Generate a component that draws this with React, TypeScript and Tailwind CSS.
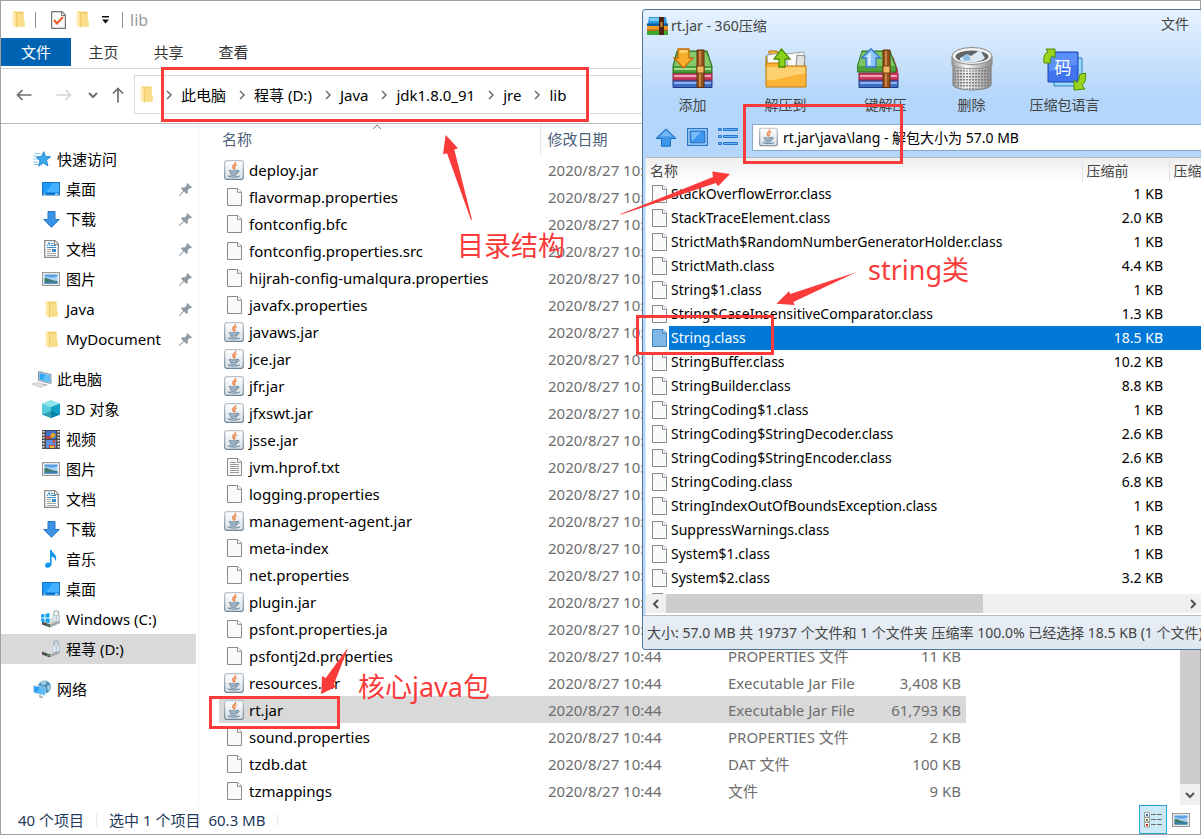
import type { ReactNode } from "react";

/* ---------- icons ---------- */

function JarIcon() {
  return (
    <svg width="20" height="20" viewBox="0 0 20 20" aria-hidden="true">
      <defs>
        <linearGradient id="jarBg" x1="0" y1="0" x2="0" y2="1">
          <stop offset="0" stopColor="#ffffff" />
          <stop offset="1" stopColor="#d9dfe4" />
        </linearGradient>
        <linearGradient id="jarEdge" x1="0" y1="0" x2="0" y2="1">
          <stop offset="0" stopColor="#b9c4cc" />
          <stop offset="1" stopColor="#6f8596" />
        </linearGradient>
      </defs>
      <rect x="0.7" y="0.7" width="18.6" height="18.6" rx="2" fill="url(#jarBg)" stroke="url(#jarEdge)" strokeWidth="1.2" />
      <path d="M11.600 2.400c.5 1.600-3.400 2.600-3 4.400.2.800 1 1.200 1.100 2.200M12.600 5c-1.500.5-2.400 1.300-1.800 2.300.4.6.2 1.200-.4 1.700" fill="none" stroke="#ea7a35" strokeWidth="1.200" strokeLinecap="round" />
      <path d="M5.200 10.200c2.200.8 6 .8 8.200 0l-.9 3.200c-1.800.6-4.400.6-6 0z" fill="#a5b7c6" stroke="#5c7d98" strokeWidth=".7" />
      <path d="M13.300 10.500c2.600-.8 2.900 1.900-.5 2.500M6.300 14.900c2 .6 4.400.6 6.200 0M4 16c2.500 1.500 9 1.500 11.500.1" fill="none" stroke="#5c7d98" strokeWidth="1" strokeLinecap="round" />
    </svg>
  );
}

function PageIcon({ lined = false, tone = "light" }: { lined?: boolean; tone?: "light" | "blue" }) {
  const fill = tone === "blue" ? "#7fb8e6" : "#fafafa";
  const edge = tone === "blue" ? "#3f7fb8" : "#8a8a8a";
  return (
    <svg width="15" height="18" viewBox="0 0 15 18" aria-hidden="true">
      <path d="M.5.500H11L14.500 4V17.500H.5z" fill={fill} stroke={edge} />
      <path d="M10.500.500V4.300H14.500" fill={tone === "blue" ? "#a9d0ef" : "#fff"} stroke={edge} />
      {lined && <path d="M3 4.500h6M3 6.500h9M3 8.500h9M3 10.500h9M3 12.500h9M3 14.500h9" stroke="#9a9a9a" />}
    </svg>
  );
}

function FolderIcon() {
  return (
    <svg width="13" height="17" viewBox="0 0 13 17" aria-hidden="true">
      <defs>
        <linearGradient id="folderFace" x1="0" y1="0" x2="1" y2="0">
          <stop offset="0" stopColor="#fff0bc" />
          <stop offset="1" stopColor="#fbe29a" />
        </linearGradient>
      </defs>
      <path d="M2 .500h9.500v9.500H12.500V15.500H2z" fill="#f3cf6c" />
      <path d="M4.500 2.500h7V10h1v5.500h-8z" fill="#f9dc88" />
      <path d="M.500 0 4.500 2.500V17L.500 15z" fill="url(#folderFace)" />
      <path d="M4.500 2.500V17" stroke="#e6bd55" strokeWidth=".6" />
    </svg>
  );
}

function StarIcon() {
  return (
    <svg width="18" height="16" viewBox="0 0 18 16" aria-hidden="true">
      <path d="M1.500 2.500h6M0 5h4M.500 8h4.500M0 11h5M1 13.500h4.500" stroke="#8ccaf0" />
      <path d="M10.800.700l1.800 4.700 5.100.3-4.200 3.400 1.500 5.800-4.600-2.900L5.600 15l1.300-5.300L3.300 5.900l5-.5z" fill="#3aa8ec" stroke="#1878c4" strokeWidth=".8" />
    </svg>
  );
}

function DesktopIcon() {
  return (
    <svg width="18" height="14" viewBox="0 0 18 14" aria-hidden="true">
      <rect x=".5" y=".5" width="17" height="12.500" fill="#1e9bf8" stroke="#1473c4" />
      <path d="M11 1h6v9H4z" fill="#45b1ff" />
      <path d="M1 11.500h16" stroke="#0c5fa8" />
      <path d="M1.500 12h2M13 12h3.500" stroke="#fff" />
    </svg>
  );
}

function DownloadIcon() {
  return (
    <svg width="17" height="17" viewBox="0 0 17 17" aria-hidden="true">
      <path d="M5 .500h7v8h4.300L8.500 16.300.700 8.500H5z" fill="#3b93e6" stroke="#2a76c4" />
    </svg>
  );
}

function DocumentIcon() {
  return (
    <svg width="15" height="18" viewBox="0 0 15 18" aria-hidden="true">
      <path d="M.700.700H11l3.300 3.300v13.300H.7z" fill="#fff" stroke="#8b8b8b" strokeWidth="1.300" />
      <path d="M10.500.700V4.500H14" fill="#fff" stroke="#8b8b8b" />
      <path d="M3 6 5 2.500 6.200 6M7 3.500h2.500M7 5.500h5M3 7.500h9" fill="none" stroke="#3c8cc8" />
      <path d="M3 9.500h4M3 11.500h4M3 13.500h9M3 15.500h9" stroke="#a2a2a2" />
      <path d="M8 9h4v3H8z" fill="#3c8cc8" />
    </svg>
  );
}

function PictureIcon() {
  return (
    <svg width="18" height="14" viewBox="0 0 18 14" aria-hidden="true">
      <rect x=".6" y=".6" width="16.800" height="12.800" fill="#fff" stroke="#9a9a9a" strokeWidth="1.200" />
      <path d="M2.500 2.500h13v9h-13z" fill="#a8d0f4" />
      <path d="M2.500 2.500h13v2l-6 1-7-1z" fill="#5c9fe0" />
      <path d="M2.500 6c3-.5 5 2 13 3v2.500h-13z" fill="#3f7a66" />
      <path d="M2.500 9.500c4 .8 9-.5 13 .5v1.500h-13z" fill="#3c80b4" />
    </svg>
  );
}

function ComputerIcon() {
  return (
    <svg width="20" height="17" viewBox="0 0 20 17" aria-hidden="true">
      <path d="M6.500.500 19 3.500v9L6.500 9.500z" fill="#d9dde0" stroke="#6e8290" strokeWidth=".8" />
      <path d="M7.500 2l10.500 2.500v7L7.500 8.600z" fill="#2ea5ee" />
      <path d="M13 3.300l5 1.200v6.900l-7-1.900z" fill="#62c0f8" />
      <path d="M11 12.500l5 1.200-2.500 1.300-5-1.500z" fill="#a9b0b5" />
      <path d="M0 13l5-1.500 8 2.500-4 2.500z" fill="#e3e6e8" stroke="#b7bcc0" strokeWidth=".7" />
    </svg>
  );
}

function CubeIcon() {
  return (
    <svg width="18" height="18" viewBox="0 0 18 18" aria-hidden="true">
      <path d="M9 0l9 3.500-9 3.500L0 3.500z" fill="#8be3ea" />
      <path d="M0 3.500 9 7v11L0 14.500z" fill="#56cbdc" />
      <path d="M18 3.500 9 7v11l9-3.500z" fill="#12a0c4" />
      <path d="M0 14.500 9 11v7z" fill="#2c9fb4" />
      <path d="M9 11l9 3.500L9 18z" fill="#0a86a8" />
    </svg>
  );
}

function VideoIcon() {
  return (
    <svg width="18" height="19" viewBox="0 0 18 19" aria-hidden="true">
      <path d="M0 0h18v19H0z" fill="#4b4b4b" />
      <path d="M4 1h10v8H4z" fill="#3d6fd0" />
      <path d="M4 10h10v8H4z" fill="#5b91e4" />
      <path d="M9 3.500c2-2 5 0 4.500 2.500L10 8.500 8 6z" fill="#e0a828" />
      <path d="M4 6l5 .5V9H4z" fill="#c43c3c" />
      <path d="M10 10.500h4L12 14zM7 15h6v3H7z" fill="#d84a30" />
      <path d="M8 16h4v2H8z" fill="#e8c040" />
      <path d="M1.500 1v17M16.500 1v17" stroke="#f4f4f4" strokeWidth="2" strokeDasharray="1.600 1.400" />
    </svg>
  );
}

function MusicIcon() {
  return (
    <svg width="12" height="18" viewBox="0 0 12 18" aria-hidden="true">
      <path d="M5 0h1.600c.3 3 5 4 4.600 8.500-.2 1.300-.6 1.800-1.200 2.500.6-2.500-.8-4-3.400-4.600V14c0 4.500-6.600 5-6.600 1.500C0 12.800 3 12 5 13z" fill="#1296f0" />
    </svg>
  );
}

function DriveIcon({ system = false }: { system?: boolean }) {
  return (
    <svg width="20" height="18" viewBox="0 0 20 18" aria-hidden="true">
      <path d="M13 5V2.500C13 .300 17.500.300 17.500 2.500V6" fill="none" stroke="#a6b0b6" strokeWidth="1.300" />
      <path d="M1 11.500 11 8l8 1.500v3.500L9 17.500l-8-3z" fill="#d8dadb" />
      <path d="M1 11.500l8 3v3l-8-3z" fill="#4c4c4c" />
      <path d="M9 14.500 19 10v3L9 17.500z" fill="#a5a8aa" />
      <path d="M6 14.500l2 .7v1l-2-.7z" fill="#4be03c" />
      <path d="M11.500 5h7.500v6.500h-7.500z" fill="#b9ccd8" />
      <path d="M12.500 6h2v5h-2zM16 6h1.500v5H16z" fill="#e6eff5" />
      {system && <path d="M0 4.500l3.500-.6v3.600H0zM4.500 3.700 8.500 3v4.500h-4zM0 8.500h3.500V12L0 11.500zM4.500 8.500h4V13l-4-.8z" fill="#12a4f0" />}
    </svg>
  );
}

function NetworkIcon() {
  return (
    <svg width="19" height="18" viewBox="0 0 19 18" aria-hidden="true">
      <circle cx="11.500" cy="7" r="6.500" fill="#4d94bd" />
      <path d="M7.500 2.500c2-2 5-2 6-1l-1 3-3 1zM14 6l3.500-1c.5 3-1 5-2.500 6z" fill="#a4cfe2" />
      <path d="M.500 5.500 12 7.500v8L.500 12.500z" fill="#2aa0ee" stroke="#d3e6f2" strokeWidth=".9" />
      <path d="M7 6.800l4.500.8v7L4 12.800z" fill="#5fbcf8" />
      <path d="M7 14.800v2l3 .7" stroke="#a0aab0" fill="none" strokeWidth="1.500" />
    </svg>
  );
}

function PinIcon() {
  return (
    <svg width="13" height="13" viewBox="0 0 13 13" aria-hidden="true">
      <path d="M8.300 0 13 4.500l-1 .8-1.200-.2L8.700 7.300l.2 2.500-1.300 1.200L5 8.500.700 13 0 12.300 4.300 8 2 5.500l1.200-1.300 2.500.2L7.800 2.200 7.500 1z" fill="#8f9ba4" />
    </svg>
  );
}

function NavArrow({ kind, color }: { kind: "back" | "forward" | "up"; color: string }) {
  const turn = kind === "back" ? undefined : kind === "forward" ? "rotate(180 8 8)" : "rotate(90 8 8)";
  return (
    <svg width="16" height="16" viewBox="0 0 16 16" aria-hidden="true">
      <path d="M6.500 3 1.500 8l5 5M1.500 8h14" transform={turn} fill="none" stroke={color} strokeWidth="1.700" />
    </svg>
  );
}

function Chevron({ dir, size = 10, color = "#6d6d6d", weight = 1.5 }: { dir: "left" | "right" | "up" | "down"; size?: number; color?: string; weight?: number }) {
  const d = { left: "M7 1 3 5l4 4", right: "M3 1l4 4-4 4", up: "M1 7l4-4 4 4", down: "M1 3l4 4 4-4" }[dir];
  return (
    <svg width={size} height={size} viewBox="0 0 10 10" aria-hidden="true">
      <path d={d} fill="none" stroke={color} strokeWidth={weight} />
    </svg>
  );
}

function ZipLogo() {
  return (
    <svg width="21" height="18" viewBox="0 0 21 18" aria-hidden="true">
      <path d="M2 0h17l1 7H1z" fill="#2c9be0" />
      <path d="M3 1h9v3H2.500z" fill="#7cc9f4" />
      <path d="M0 6.500h21V9H0z" fill="#0f5f9e" />
      <path d="M0 9h21v4H0z" fill="#f39a24" />
      <path d="M0 13h21v5H0z" fill="#3fa82c" />
      <path d="M0 12.500h21v1.200H0z" fill="#c65c10" />
      <path d="M12 0h5v18h-5z" fill="#4a2410" />
      <path d="M13.500 5h2v5h-2z" fill="#d89040" />
    </svg>
  );
}

function BookStack({ open = false }: { open?: boolean }) {
  return (
    <>
      <path d="M2 32h39v7.500H2z" fill="#3f6cc4" stroke="#1c3c86" />
      <path d="M3 34h37v2H3z" fill="#8fb0e8" />
      <path d="M2 25h39v7H2z" fill="#c93a63" stroke="#8e1c40" />
      <path d="M3 27h37v2H3z" fill="#eea0b6" />
      {open ? (
        <>
          <path d="M36 8l5 14v6l-6-4z" fill="#c42c50" />
          <path d="M5 3h28l6 16v5H0v-5z" fill="#4ea23c" stroke="#2c7020" />
          <path d="M5 4h27l6 14H1z" fill="#7cc45e" />
        </>
      ) : (
        <>
          <path d="M6 3h30l5 15v7H2v-7z" fill="#4a9c38" stroke="#2c7020" />
          <path d="M7 4h28l5 14H3z" fill="#86c96a" />
          <path d="M3 20h37v2H3z" fill="#a8dc90" />
        </>
      )}
      <path d="M26 2h7v37.500h-7z" fill="#96521c" stroke="#5e2f0c" />
      <path d="M28 3h2v36h-2z" fill="#c98448" />
      <path d="M26 18h7v7h-7z" fill="#f0b860" stroke="#7a420f" />
    </>
  );
}

function AddArchiveIcon() {
  return (
    <svg width="44" height="42" viewBox="0 0 44 42" aria-hidden="true">
      <BookStack />
      <path d="M7 1h11v9h4L12.500 20 3 10h4z" fill="#f8ae2c" stroke="#c46c0c" strokeWidth="1.300" />
      <path d="M8.500 2.500h8v2h-8z" fill="#fddc8c" />
    </svg>
  );
}

function ExtractToIcon() {
  return (
    <svg width="44" height="42" viewBox="0 0 44 42" aria-hidden="true">
      <path d="M5 3h8l2 4v12H2V8h3z" fill="#f0b43c" stroke="#a8700c" />
      <path d="M3 7l14-2 1 15H4zM22 6l18-2 1 16H24z" fill="#fafafa" stroke="#a0a0a0" />
      <path d="M33 7l8 1-1 12h-8z" fill="#e2e2e2" stroke="#8a8a8a" />
      <path d="M2 15h14l3 3h23v21H2z" fill="#fbb437" stroke="#c27c0c" />
      <path d="M3 19h38v7c-14 0-20 6-38 6z" fill="#fdd070" />
      <path d="M15 19v-8h-5L17.500 1 26 11h-5v8z" fill="#8cd41c" stroke="#4c8c08" strokeWidth="1.300" />
    </svg>
  );
}

function OneClickIcon() {
  return (
    <svg width="44" height="42" viewBox="0 0 44 42" aria-hidden="true">
      <BookStack open />
      <path d="M9 19v-9H4.500L14 .700 23.500 10H19v9z" fill="#8cc4fc" stroke="#3878cc" strokeWidth="1.300" />
      <path d="M11 17V9h-2l5-5v13z" fill="#d0e8ff" />
    </svg>
  );
}

function TrashIcon() {
  return (
    <svg width="42" height="46" viewBox="0 0 42 46" aria-hidden="true">
      <defs>
        <linearGradient id="binBody" x1="0" y1="0" x2="1" y2="0">
          <stop offset="0" stopColor="#9c9c9c" />
          <stop offset=".35" stopColor="#f6f6f6" />
          <stop offset="1" stopColor="#8c8c8c" />
        </linearGradient>
        <pattern id="binHoles" width="3" height="3" patternUnits="userSpaceOnUse">
          <path d="M0 0h2v1.500H0z" fill="#7d7d7d" />
        </pattern>
      </defs>
      <path d="M2 10v29c2 6.500 36 6.500 38 0V10z" fill="url(#binBody)" stroke="#777" />
      <path d="M3.500 22c9 3.500 26 3.500 35 0v17c-6 5-29 5-35 0z" fill="url(#binHoles)" />
      <path d="M1 10v9c5 5 35 5 40 0v-9z" fill="url(#binBody)" stroke="#8a8a8a" />
      <ellipse cx="21" cy="10" rx="20" ry="8.500" fill="#f2f2f2" stroke="#8a8a8a" />
      <ellipse cx="21" cy="10.500" rx="16.500" ry="6" fill="#5f6468" />
      <path d="M9 12l7-4 4 2 9-6 5 8c-5 5-19 6-25 2z" fill="#dce9f2" />
      <path d="M11 11l6-3 3 6-6 1z" fill="#88bce4" />
    </svg>
  );
}

function LanguageIcon() {
  return (
    <svg width="44" height="44" viewBox="0 0 44 44" aria-hidden="true">
      <path d="M11 11h28v28H11z" fill="#9cd8f8" stroke="#2c84c4" />
      <path d="M5 5h30v30H5z" fill="#3f74ee" stroke="#1c48b0" />
      <path d="M6 6h28v12C22 18 18 24 6 24z" fill="#5c90f8" />
      <text x="20" y="27" textAnchor="middle" fontSize="17" fill="#fff" fontFamily="'Noto Sans CJK SC', sans-serif">码</text>
      <path d="M1 16c-1-7 1-10 4-11L3 2h9v9l-2.500-2C7 10 7 13 7.500 16z" fill="#9ad41c" stroke="#4f8c08" />
      <path d="M42.500 26c.5 7-.5 10-3.500 12l3 4-11 1V33l3 2.500c2-2 2.500-5 2.500-8z" fill="#9ad41c" stroke="#4f8c08" />
    </svg>
  );
}

function UpFolderIcon() {
  return (
    <svg width="22" height="19" viewBox="0 0 22 19" aria-hidden="true">
      <path d="M11 .800 21 10.500h-5.500v7.700h-9v-7.700H1z" fill="#3f97ea" stroke="#1b6cc0" />
      <path d="M11 2.500l6 6H5z" fill="#74b8f6" />
    </svg>
  );
}

function ThumbViewIcon() {
  return (
    <svg width="21" height="18" viewBox="0 0 21 18" aria-hidden="true">
      <rect x=".7" y=".7" width="19.600" height="16.600" fill="#d4ebff" stroke="#2878d0" strokeWidth="1.400" />
      <path d="M3 3h15v12H3z" fill="#3c96ee" stroke="#1c68c0" />
      <path d="M4 4h10L5 13z" fill="#78bcf8" />
    </svg>
  );
}

function ListViewIcon() {
  return (
    <svg width="20" height="18" viewBox="0 0 20 18" aria-hidden="true">
      <path d="M.500.500h3v2h-3zM5.500.500h14v2h-14zM.500 7.500h3v2h-3zM5.500 7.500h14v2h-14zM.500 14.500h3v2h-3zM5.500 14.500h14v2h-14z" fill="#6ab0f4" stroke="#2a76cc" />
    </svg>
  );
}

/* ---------- data ---------- */

type FileRow = { name: string; icon: "jar" | "page" | "text"; type?: string; size?: string };

const files: FileRow[] = [
  { name: "deploy.jar", icon: "jar" },
  { name: "flavormap.properties", icon: "page" },
  { name: "fontconfig.bfc", icon: "page" },
  { name: "fontconfig.properties.src", icon: "page" },
  { name: "hijrah-config-umalqura.properties", icon: "page" },
  { name: "javafx.properties", icon: "page" },
  { name: "javaws.jar", icon: "jar" },
  { name: "jce.jar", icon: "jar" },
  { name: "jfr.jar", icon: "jar" },
  { name: "jfxswt.jar", icon: "jar" },
  { name: "jsse.jar", icon: "jar" },
  { name: "jvm.hprof.txt", icon: "text" },
  { name: "logging.properties", icon: "page" },
  { name: "management-agent.jar", icon: "jar" },
  { name: "meta-index", icon: "page" },
  { name: "net.properties", icon: "page" },
  { name: "plugin.jar", icon: "jar" },
  { name: "psfont.properties.ja", icon: "page" },
  { name: "psfontj2d.properties", icon: "page", type: "PROPERTIES 文件", size: "11 KB" },
  { name: "resources.jar", icon: "jar", type: "Executable Jar File", size: "3,408 KB" },
  { name: "rt.jar", icon: "jar", type: "Executable Jar File", size: "61,793 KB" },
  { name: "sound.properties", icon: "page", type: "PROPERTIES 文件", size: "2 KB" },
  { name: "tzdb.dat", icon: "page", type: "DAT 文件", size: "100 KB" },
  { name: "tzmappings", icon: "page", type: "文件", size: "9 KB" },
];

const classes: [string, string][] = [
  ["StackOverflowError.class", "1 KB"],
  ["StackTraceElement.class", "2.0 KB"],
  ["StrictMath$RandomNumberGeneratorHolder.class", "1 KB"],
  ["StrictMath.class", "4.4 KB"],
  ["String$1.class", "1 KB"],
  ["String$CaseInsensitiveComparator.class", "1.3 KB"],
  ["String.class", "18.5 KB"],
  ["StringBuffer.class", "10.2 KB"],
  ["StringBuilder.class", "8.8 KB"],
  ["StringCoding$1.class", "1 KB"],
  ["StringCoding$StringDecoder.class", "2.6 KB"],
  ["StringCoding$StringEncoder.class", "2.6 KB"],
  ["StringCoding.class", "6.8 KB"],
  ["StringIndexOutOfBoundsException.class", "1 KB"],
  ["SuppressWarnings.class", "1 KB"],
  ["System$1.class", "1 KB"],
  ["System$2.class", "3.2 KB"],
];

/* ---------- explorer ---------- */

function SideItem({ icon, label, pinned = false, root = false, selected = false }: { icon: ReactNode; label: string; pinned?: boolean; root?: boolean; selected?: boolean }) {
  return (
    <li>
      <a
        href="#"
        className={`flex h-[30px] items-center pr-1 ${root ? "pl-[31px]" : "pl-10"} ${selected ? "bg-[#d9d9d9]" : ""}`}
      >
        <span className="flex w-5 shrink-0 items-center justify-center">{icon}</span>
        <span className="ml-[5px] grow">{label}</span>
        {pinned && <PinIcon />}
      </a>
    </li>
  );
}

function Sidebar() {
  return (
    <nav aria-label="导航" className="w-[198px] shrink-0 border-r border-[#f2f2f2] pt-5">
      <ul className="mr-0.5">
        <SideItem root icon={<StarIcon />} label="快速访问" />
        <SideItem pinned icon={<DesktopIcon />} label="桌面" />
        <SideItem pinned icon={<DownloadIcon />} label="下载" />
        <SideItem pinned icon={<DocumentIcon />} label="文档" />
        <SideItem pinned icon={<PictureIcon />} label="图片" />
        <SideItem pinned icon={<FolderIcon />} label="Java" />
        <SideItem pinned icon={<FolderIcon />} label="MyDocument" />
      </ul>
      <ul className="mt-2.5 mr-0.5">
        <SideItem root icon={<ComputerIcon />} label="此电脑" />
        <SideItem icon={<CubeIcon />} label="3D 对象" />
        <SideItem icon={<VideoIcon />} label="视频" />
        <SideItem icon={<PictureIcon />} label="图片" />
        <SideItem icon={<DocumentIcon />} label="文档" />
        <SideItem icon={<DownloadIcon />} label="下载" />
        <SideItem icon={<MusicIcon />} label="音乐" />
        <SideItem icon={<DesktopIcon />} label="桌面" />
        <SideItem icon={<DriveIcon system />} label="Windows (C:)" />
        <SideItem selected icon={<DriveIcon />} label="程荨 (D:)" />
      </ul>
      <ul className="mt-2.5 mr-0.5">
        <SideItem root icon={<NetworkIcon />} label="网络" />
      </ul>
    </nav>
  );
}

function FileTable() {
  return (
    <div className="min-w-0 grow pl-5">
      <table className="w-[747px] table-fixed border-collapse text-left">
        <colgroup>
          <col className="w-[321px]" />
          <col className="w-[180px]" />
          <col className="w-[140px]" />
          <col className="w-[106px]" />
        </colgroup>
        <thead>
          <tr className="h-8 text-[#4c607a]">
            <th className="relative pt-0 pb-0.5 pl-[3px] font-normal">
              名称
              <span className="absolute -top-0.5 left-[153px]">
                <Chevron dir="up" color="#707070" weight={1} />
              </span>
            </th>
            <th className="border-l border-[#e5e5e5] pt-0 pb-0.5 pl-[7px] font-normal">修改日期</th>
            <td />
            <td />
          </tr>
        </thead>
        <tbody className="text-[#6d6d6d]">
          {files.map((f) => (
            <tr key={f.name} className={`h-[27px] ${f.name === "rt.jar" ? "bg-[#d9d9d9]" : ""}`}>
              <td className="p-0 text-black">
                <div className="flex items-center">
                  <span className="ml-[5px] flex w-5 shrink-0 justify-center">
                    {f.icon === "jar" ? <JarIcon /> : <PageIcon lined={f.icon === "text"} />}
                  </span>
                  <span className="ml-[5px] whitespace-nowrap">{f.name}</span>
                </div>
              </td>
              <td className="p-0 pl-2 whitespace-nowrap">2020/8/27 10:44</td>
              <td className="p-0 pl-2 whitespace-nowrap">{f.type}</td>
              <td className="p-0 pr-[5px] text-right whitespace-nowrap">{f.size}</td>
            </tr>
          ))}
        </tbody>
      </table>
    </div>
  );
}

const crumbs = ["此电脑", "程荨 (D:)", "Java", "jdk1.8.0_91", "jre", "lib"];

function Explorer() {
  return (
    <section aria-label="lib" className="flex min-h-screen flex-col border border-[#a0a0a0] bg-white text-[15px] leading-5 text-black">
      <header className="flex h-[37px] items-center pl-[11px]">
        <FolderIcon />
        <span className="ml-[10px] h-4 w-px bg-[#8c8c8c]" />
        <svg className="ml-[15px]" width="15" height="18" viewBox="0 0 15 18" aria-hidden="true">
          <path d="M.600.600H11L14.400 4v13.400H.6z" fill="#fafafa" stroke="#767676" strokeWidth="1.200" />
          <path d="M10.500.600V4.500h4" fill="none" stroke="#767676" />
          <path d="M3 9l3 3.500L12 6" fill="none" stroke="#ee5a1c" strokeWidth="2" />
        </svg>
        <span className="ml-[10px]"><FolderIcon /></span>
        <svg className="ml-3" width="9" height="8" viewBox="0 0 9 8" aria-hidden="true">
          <path d="M1 0h7v1.500H1zM1 3.500h7L4.500 7.500z" fill="#111" />
        </svg>
        <span className="ml-3 h-4 w-px bg-[#8c8c8c]" />
        <h1 className="ml-[7px] text-base text-[#999]">lib</h1>
      </header>
      <div className="flex h-[31px] border-b border-[#dadada] pb-[2px] text-[#333]">
        <button className="w-[70px] bg-[#0063b1] text-white">文件</button>
        <button className="w-[65px]">主页</button>
        <button className="w-[65px]">共享</button>
        <button className="w-[65px]">查看</button>
      </div>
      <div className="flex h-[55px] items-center border-b border-[#b8b8b8] pb-[3px] pl-[15px]">
        <button aria-label="后退"><NavArrow kind="back" color="#6d6d6d" /></button>
        <button aria-label="前进" className="ml-6"><NavArrow kind="forward" color="#d4d4d4" /></button>
        <button aria-label="最近" className="ml-4"><Chevron dir="down" weight={2} /></button>
        <button aria-label="上移" className="ml-3"><NavArrow kind="up" color="#6d6d6d" /></button>
        <div className="ml-2 flex h-[39px] grow items-center border border-[#d9d9d9] pl-[5px]">
          <FolderIcon />
          <ol className="flex items-center">
            {crumbs.map((c) => (
              <li key={c} className="ml-[11px] flex items-center gap-[7px]">
                <Chevron dir="right" />
                <button>{c}</button>
              </li>
            ))}
          </ol>
        </div>
      </div>
      <div className="flex grow">
        <Sidebar />
        <FileTable />
        <div className="flex w-5 shrink-0 flex-col bg-[#f0f0f0]">
          <div className="grow bg-[#cdcdcd]" />
          <button aria-label="向下滚动" className="flex h-[21px] items-center justify-center">
            <Chevron dir="down" color="#505050" weight={2} />
          </button>
        </div>
      </div>
      <footer className="flex h-[29px] items-center pl-[17px] text-[#1e395b]">
        <span>40 个项目</span>
        <span className="ml-3 h-3 w-px bg-[#e8e8e8]" />
        <span className="ml-3">选中 1 个项目</span>
        <span className="ml-2">60.3 MB</span>
        <span className="ml-3 h-3 w-px bg-[#e8e8e8]" />
        <span className="grow" />
        <button aria-label="详细信息" className="flex h-[29px] w-7 items-center justify-center border border-[#2a9fd8] bg-[#cbe8f6]">
          <svg width="18" height="16" viewBox="0 0 18 16" aria-hidden="true">
            <path d="M.500.500h5v4.500h-5zM.500 5.500h5V10h-5zM.500 10.500h5V15h-5z" fill="#fff" stroke="#9a9a9a" />
            <path d="M2 2h2v2H2z" fill="#3070b0" />
            <path d="M2 7h2v2H2z" fill="#80902c" />
            <path d="M2 12h2v2H2z" fill="#c02c10" />
            <path d="M7 2.500h5M13 2.500h5M7 7.500h5M13 7.500h5M7 12.500h5M13 12.500h5" stroke="#6d6d6d" />
          </svg>
        </button>
        <button aria-label="大图标" className="mr-2.5 ml-[5px]"><PictureIcon /></button>
      </footer>
    </section>
  );
}

/* ---------- archive window ---------- */

function ToolButton({ icon, label }: { icon: ReactNode; label: string }) {
  return (
    <button className="flex w-[93px] flex-col items-center">
      <span className="flex h-[46px] items-center">{icon}</span>
      <span className="mt-1 leading-[18px] whitespace-nowrap">{label}</span>
    </button>
  );
}

function ArchiveWindow() {
  return (
    <section
      aria-label="rt.jar - 360压缩"
      className="absolute top-[9px] right-0 left-[642px] flex flex-col overflow-hidden rounded-l border border-r-0 border-[#50779b] bg-[#b5d7fa] text-[14px] leading-5 text-[#444]"
    >
      <div className="bg-linear-to-b from-[#e6f2fe] to-[#b3d6fa] to-60%">
        <header className="flex h-8 items-center pr-3 pl-1">
          <ZipLogo />
          <h2 className="ml-[3px] grow">rt.jar - 360压缩</h2>
          <button className="-mt-1">文件</button>
        </header>
        <div className="flex h-[72px] items-start pt-1 pl-[3px]">
          <ToolButton icon={<AddArchiveIcon />} label="添加" />
          <ToolButton icon={<ExtractToIcon />} label="解压到" />
          <ToolButton icon={<OneClickIcon />} label="一键解压" />
          <ToolButton icon={<TrashIcon />} label="删除" />
          <ToolButton icon={<LanguageIcon />} label="压缩包语言" />
        </div>
        <div className="flex h-[43px] items-center pt-[3px] pl-3">
          <button aria-label="向上"><UpFolderIcon /></button>
          <button aria-label="缩略图" className="ml-2.5"><ThumbViewIcon /></button>
          <button aria-label="列表" className="ml-2.5"><ListViewIcon /></button>
          <div className="ml-[14px] flex h-[27px] grow items-center border border-r-0 border-[#86a9cc] bg-white pl-1.5">
            <JarIcon />
            <input readOnly aria-label="路径" className="ml-[5px] h-full w-full min-w-0 grow bg-transparent text-black outline-none" value={"rt.jar\\java\\lang - 解包大小为 57.0 MB"} />
          </div>
        </div>
      </div>
      <div className="ml-0.5 border-t border-l border-[#b9b9b9] border-l-[#d5e6f5] bg-white">
        <div className="h-[436px] overflow-hidden">
          <table className="w-full table-fixed border-collapse">
            <colgroup>
              <col />
              <col className="w-[87px]" />
              <col className="w-[32px]" />
            </colgroup>
            <thead>
              <tr className="h-6 bg-linear-to-b from-[#eeeeee] to-white text-left">
                <th className="pt-0.5 pb-0 pl-1 font-normal">名称</th>
                <th className="border-l border-[#e2e2e2] pt-0.5 pb-0 pl-1 font-normal">压缩前</th>
                <th className="border-l border-[#e2e2e2] pt-0.5 pb-0 pl-1 font-normal whitespace-nowrap">压缩后</th>
              </tr>
            </thead>
            <tbody>
              {classes.map(([name, size]) => {
                const on = name === "String.class";
                const tone = on ? "bg-[#0078d7] text-white" : "text-black";
                return (
                  <tr key={name} className="h-6">
                    <td className="p-0">
                      <div className="flex h-6 items-center">
                        <span className="flex w-[23px] shrink-0 pl-1.5"><PageIcon tone={on ? "blue" : "light"} /></span>
                        <span className={`flex h-6 grow items-center pl-0.5 whitespace-nowrap ${tone}`}>{name}</span>
                      </div>
                    </td>
                    <td className={`p-0 pr-1.5 text-right ${tone}`}>{size}</td>
                    <td className={`p-0 ${tone}`} />
                  </tr>
                );
              })}
              <tr>
                <td className="p-0 pt-[3px] pl-1.5"><PageIcon /></td>
                <td />
                <td />
              </tr>
            </tbody>
          </table>
        </div>
        <div className="flex h-[19px] items-center bg-[#f0f0f0]">
          <button aria-label="向左滚动" className="flex w-5 justify-center"><Chevron dir="left" color="#505050" weight={2} /></button>
          <div className="h-full w-[317px] bg-[#cdcdcd]" />
          <span className="grow" />
          <button aria-label="向右滚动" className="mr-0.5 flex w-3 justify-center"><Chevron dir="right" color="#505050" weight={2} /></button>
        </div>
        <div className="h-0.5" />
      </div>
      <footer className="flex h-[34px] items-center overflow-hidden border-t border-[#b9b9b9] bg-linear-to-b from-[#e8eff6] to-[#dfe7ef] pl-1 whitespace-nowrap">
        大小: 57.0 MB 共 19737 个文件和 1 个文件夹 压缩率 100.0% 已经选择 18.5 KB (1 个文件)
      </footer>
    </section>
  );
}

/* ---------- hand-drawn notes ---------- */

function Notes() {
  return (
    <div className="pointer-events-none absolute inset-0 overflow-hidden text-[27px] leading-8 text-[#fb3b3a]">
      <div className="absolute top-[67px] left-[161px] h-[55px] w-[428px] border-3 border-[#fb3b3a]" />
      <div className="absolute top-[104px] left-[743px] h-[60px] w-[160px] border-3 border-[#fb3b3a]" />
      <div className="absolute top-[315px] left-[636px] h-10 w-[138px] border-3 border-[#fb3b3a]" />
      <div className="absolute top-[696px] left-[209px] h-[33px] w-[131px] border-3 border-[#fb3b3a]" />
      <svg className="absolute top-0 left-0" width="900" height="720" viewBox="0 0 900 720" fill="#fb3b3a" aria-hidden="true">
        <path d="M445.700 135l12.300 13.300-3.700 1.200 17.700 70.200-1 .3-24-66.700-4 1z" />
        <path d="M730 174l-17.700-2.500.7 5.500-92.500 37v.7l95.500-31.700 2 3.200z" />
        <path d="M776.300 303.700l12.700-12.500 1.300 2.800 66.500-22-63.500 30 1.500 3z" />
        <path d="M321.300 694l.7-18 3.700 2 21.300-29 .5.500-13.800 35.300 3.300 1.500z" />
      </svg>
      <span className="absolute top-[230px] left-[457px] whitespace-nowrap">目录结构</span>
      <span className="absolute top-[254px] left-[868px] whitespace-nowrap">string类</span>
      <span className="absolute top-[671px] left-[358px] whitespace-nowrap">核心java包</span>
    </div>
  );
}

export default function App() {
  return (
    <main className="relative min-h-screen overflow-hidden font-['Noto_Sans','Noto_Sans_CJK_SC',sans-serif]">
      <Explorer />
      <ArchiveWindow />
      <Notes />
    </main>
  );
}
